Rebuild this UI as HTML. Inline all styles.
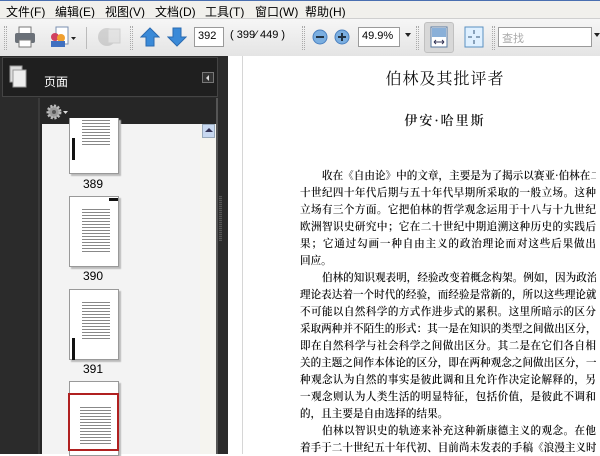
<!DOCTYPE html>
<html><head><meta charset="utf-8"><style>
*{margin:0;padding:0;box-sizing:border-box}
body{width:600px;height:454px;overflow:hidden;position:relative;background:#fff;font-family:"Liberation Sans","Noto Sans CJK SC",sans-serif}
.a{position:absolute}
#menu{left:0;top:0;width:600px;height:18px;background:#f1f0ec;border-top:1px solid #4a6fb0;font-size:12px;color:#000}
#menu span{position:absolute;top:2px}
#tb{left:0;top:18px;width:600px;height:38px;background:linear-gradient(#f6f6f6,#e4e4e4);border-top:1px solid #cfcfcf}
.grip{width:3px;height:24px;top:7px;border-left:1px dotted #aaa;border-right:1px dotted #aaa}
.box{background:#fff;border:1px solid #9a9a9a;font-size:11px;color:#000;height:20px;top:8px;padding:2px 3px}
#panel{left:0;top:56px;width:228px;height:398px;background:#2b2b2b}
.doc{color:#111}
.ln{position:absolute;left:300px;width:296px;font-size:10.6px;line-height:17px;height:17px;text-align:justify;text-align-last:justify;white-space:nowrap;font-family:"Noto Serif CJK SC",serif;color:#111;font-weight:600;overflow:hidden}
.ln.i{left:322px;width:274px}
.ln.l{text-align-last:left}
.th{position:absolute;background:#fff;border:1px solid #999;box-shadow:2px 2px 1px #bbb}
.th i{position:absolute;left:12px;right:8px;background:repeating-linear-gradient(#888 0 1px,#fff 1px 3px)}
.lab{position:absolute;font-size:12px;color:#000;width:40px;text-align:center;left:73px}
</style></head><body>
<div id="menu" class="a">
<span style="left:6px">文件(F)</span><span style="left:55px">编辑(E)</span><span style="left:105px">视图(V)</span><span style="left:155px">文档(D)</span><span style="left:205px">工具(T)</span><span style="left:255px">窗口(W)</span><span style="left:305px">帮助(H)</span>
</div>
<div id="tb" class="a">
<div class="a grip" style="left:4px"></div>
<svg class="a" style="left:14px;top:6px" width="22" height="24"><rect x="5" y="2" width="12" height="7" fill="#fff" stroke="#777"/><rect x="1" y="8" width="20" height="10" rx="2" fill="#6a7078"/><rect x="5" y="15" width="12" height="7" fill="#fff" stroke="#777"/></svg>
<svg class="a" style="left:46px;top:6px" width="30" height="24"><rect x="10" y="2" width="12" height="17" fill="#fff" stroke="#7a8fb0"/><circle cx="9" cy="12" r="4" fill="#d04060"/><circle cx="15" cy="13" r="4" fill="#f0a030"/><rect x="5" y="16" width="14" height="6" fill="#4070c0"/><path d="M25 12h5l-2.5 3z" fill="#222"/></svg>
<div class="a" style="left:86px;top:8px;width:1px;height:22px;background:#bbb"></div>
<svg class="a" style="left:96px;top:6px" width="26" height="24" opacity=".35"><circle cx="11" cy="12" r="9" fill="#999"/><rect x="12" y="4" width="12" height="14" fill="#ccc" stroke="#999"/></svg>
<div class="a grip" style="left:130px"></div>
<svg class="a" style="left:140px;top:7px" width="20" height="22"><path d="M10 2L19 11H14V20H6V11H1Z" fill="#3a8ad8" stroke="#2a6ab0"/></svg>
<svg class="a" style="left:167px;top:7px" width="20" height="22"><path d="M10 20L19 11H14V2H6V11H1Z" fill="#3a8ad8" stroke="#2a6ab0"/></svg>
<div class="a box" style="left:194px;width:30px">392</div>
<div class="a" style="left:230px;top:10px;font-size:11px">( 399⁄ 449 )</div>
<div class="a grip" style="left:302px"></div>
<svg class="a" style="left:312px;top:10px" width="16" height="16"><circle cx="8" cy="8" r="7" fill="#7aaee0" stroke="#4a80c0"/><rect x="4" y="7" width="8" height="2" fill="#234"/></svg>
<svg class="a" style="left:334px;top:10px" width="16" height="16"><circle cx="8" cy="8" r="7" fill="#7aaee0" stroke="#4a80c0"/><path d="M4 7h8v2H4zM7 4h2v8H7z" fill="#234"/></svg>
<div class="a box" style="left:358px;width:42px">49.9%</div>
<div class="a" style="left:405px;top:14px;border:3px solid transparent;border-top:4px solid #222"></div>
<div class="a grip" style="left:416px"></div>
<div class="a" style="left:424px;top:3px;width:30px;height:31px;background:#d8d8d8;border:1px solid #c0c0c0;border-radius:3px"></div>
<svg class="a" style="left:430px;top:7px" width="18" height="22"><rect x="1" y="1" width="16" height="20" fill="#fff" stroke="#5a7aa0"/><rect x="2" y="2" width="14" height="9" fill="#8ab0d8"/><path d="M4 16h10M4 16l2-2M4 16l2 2M14 16l-2-2M14 16l-2 2" stroke="#335" fill="none"/></svg>
<svg class="a" style="left:464px;top:7px" width="20" height="22"><rect x="1" y="1" width="18" height="20" fill="#dff0ff" stroke="#5a90c0"/><path d="M10 4v4M10 14v4M4 11h4M12 11h4" stroke="#357" /></svg>
<div class="a grip" style="left:492px"></div>
<div class="a box" style="left:498px;width:94px;color:#aaa">查找</div>
<div class="a" style="left:594px;top:14px;border:3px solid transparent;border-top:4px solid #222"></div>
</div>

<div id="panel" class="a">
<div class="a" style="left:2px;top:1px;width:216px;height:40px;background:#1f1f1f;border:1px solid #444"></div>
<svg class="a" style="left:8px;top:8px" width="20" height="26"><rect x="2" y="2" width="12" height="16" fill="#ddd" stroke="#999"/><rect x="5" y="6" width="13" height="17" fill="#eee" stroke="#999"/></svg>
<div class="a" style="left:44px;top:17px;font-size:12px;color:#fff">页面</div>
<div class="a" style="left:202px;top:16px;width:12px;height:11px;border:1px solid #777;background:#333"></div>
<div class="a" style="left:206px;top:19px;border:3px solid transparent;border-right:3px solid #ddd;border-left:none"></div>
<div class="a" style="left:38px;top:42px;width:180px;height:356px;background:#262626;border-left:2px solid #3a3a3a"></div>
<svg class="a" style="left:46px;top:48px" width="24" height="16"><circle cx="8" cy="8" r="6" fill="#999" stroke="#bbb" stroke-dasharray="2 1.5" stroke-width="3"/><circle cx="8" cy="8" r="2" fill="#555"/><path d="M17 7h5l-2.5 3z" fill="#ddd"/></svg>
<div class="a" style="left:42px;top:68px;width:174px;height:330px;background:#f3f3f3"></div>
<div class="a" style="left:200px;top:68px;width:16px;height:330px;background:#f5f4ef"></div>
<div class="a" style="left:202px;top:68px;width:13px;height:14px;background:#c8d8f0;border:1px solid #9ab"></div>
<div class="a" style="left:205px;top:72px;border:4px solid transparent;border-bottom:4px solid #335;border-top:none"></div>
<div class="a" style="left:216px;top:42px;width:2px;height:356px;background:#555"></div>
<div class="a" style="left:219px;top:140px;width:3px;height:45px;background:repeating-linear-gradient(#555 0 1px,#333 1px 2px)"></div>
</div>
<div class="th" style="left:69px;top:118px;width:50px;height:56px;border-top:none"><i style="top:2px;height:26px"></i><b class="a" style="left:2px;top:20px;width:3px;height:22px;background:#111"></b></div>
<div class="lab" style="top:177px">389</div>
<div class="th" style="left:69px;top:196px;width:50px;height:71px"><i style="top:12px;height:44px"></i><b class="a" style="right:0;top:1px;width:9px;height:3px;background:#111"></b></div>
<div class="lab" style="top:269px">390</div>
<div class="th" style="left:69px;top:289px;width:50px;height:71px"><i style="top:12px;height:38px"></i><b class="a" style="left:2px;top:48px;width:3px;height:22px;background:#111"></b></div>
<div class="lab" style="top:362px">391</div>
<div class="th" style="left:69px;top:381px;width:50px;height:75px"></div>
<div class="a" style="left:68px;top:393px;width:51px;height:58px;border:2px solid #b02020"><i class="a" style="left:10px;right:6px;top:12px;height:38px;background:repeating-linear-gradient(#888 0 1px,#fff 1px 3px)"></i></div>

<div class="a" style="left:242px;top:56px;width:1px;height:398px;background:#bbb;opacity:.6"></div>
<div class="a doc" style="left:259px;top:66px;width:372px;text-align:center;font-size:16px;font-family:'Noto Serif CJK SC',serif;letter-spacing:1px">伯林及其批评者</div>
<div class="a doc" style="left:259px;top:110px;width:372px;text-align:center;font-size:13px;font-family:'Noto Serif CJK SC',serif;letter-spacing:2px;font-weight:600">伊安·哈里斯</div>
<div class="ln i" style="top:167px">收在《自由论》中的文章，主要是为了揭示以赛亚·伯林在二</div>
<div class="ln" style="top:184px">十世纪四十年代后期与五十年代早期所采取的一般立场。这种</div>
<div class="ln" style="top:201px">立场有三个方面。它把伯林的哲学观念运用于十八与十九世纪</div>
<div class="ln" style="top:218px">欧洲智识史研究中；它在二十世纪中期追溯这种历史的实践后</div>
<div class="ln" style="top:235px">果；它通过勾画一种自由主义的政治理论而对这些后果做出</div>
<div class="ln l" style="top:252px">回应。</div>
<div class="ln i" style="top:269px">伯林的知识观表明，经验改变着概念构架。例如，因为政治</div>
<div class="ln" style="top:286px">理论表达着一个时代的经验，而经验是常新的，所以这些理论就</div>
<div class="ln" style="top:303px">不可能以自然科学的方式作进步式的累积。这里所暗示的区分</div>
<div class="ln" style="top:320px">采取两种并不陌生的形式：其一是在知识的类型之间做出区分，</div>
<div class="ln" style="top:337px">即在自然科学与社会科学之间做出区分。其二是在它们各自相</div>
<div class="ln" style="top:354px">关的主题之间作本体论的区分，即在两种观念之间做出区分，一</div>
<div class="ln" style="top:371px">种观念认为自然的事实是彼此调和且允许作决定论解释的，另</div>
<div class="ln" style="top:388px">一观念则认为人类生活的明显特征，包括价值，是彼此不调和</div>
<div class="ln l" style="top:405px">的，且主要是自由选择的结果。</div>
<div class="ln i" style="top:422px">伯林以智识史的轨迹来补充这种新康德主义的观念。在他</div>
<div class="ln" style="top:439px">着手于二十世纪五十年代初、目前尚未发表的手稿《浪漫主义时</div>
</body></html>
